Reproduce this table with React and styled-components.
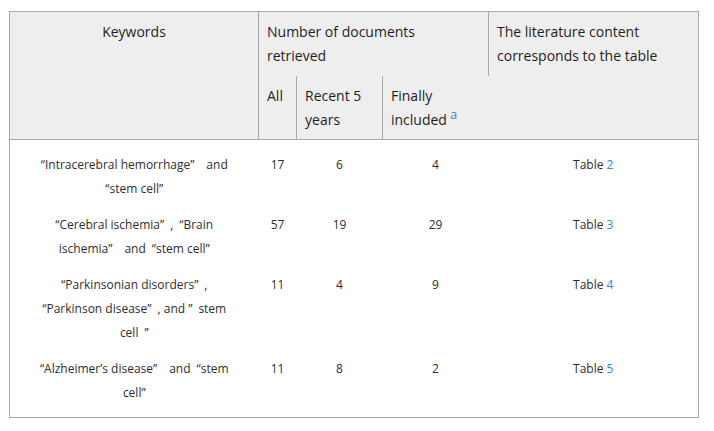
import React from 'react';
import styled, { createGlobalStyle } from 'styled-components';

const GlobalStyle = createGlobalStyle`
  body {
    margin: 0;
    background: #fff;
    font-family: "Open Sans", "Liberation Sans", sans-serif;
  }
`;

const Page = styled.div`
  padding: 11px 0 0 9px;
`;

const Table = styled.table`
  width: 689px;
  table-layout: fixed;
  border-collapse: collapse;
  border: 1px solid #a8a8a8;
`;

const HeadCell = styled.th`
  background-color: #eeeeee;
  color: #1e1e1e;
  font-size: 14px;
  font-weight: 400;
  line-height: 24px;
  text-align: ${(p) => (p.$center ? 'center' : 'left')};
  vertical-align: top;
  padding: 8px 8px ${(p) => (p.$lower ? '7px' : '8px')};
  border-right: ${(p) => (p.$divider ? '1px solid #a8a8a8' : 'none')};
  border-bottom: ${(p) => (p.$lower ? '1px solid #a8a8a8' : 'none')};
`;

const Sup = styled.sup`
  color: #3f7fbf;
  font-size: 13px;
  line-height: 0;
  margin-left: 3px;
  vertical-align: 6px;
`;

const Row = styled.tr`
  &:first-child td {
    padding-top: 13px;
  }
  &:last-child td {
    padding-bottom: 12px;
  }
`;

const Cell = styled.td`
  color: #2e2e2e;
  font-size: 12px;
  line-height: 24px;
  text-align: center;
  vertical-align: top;
  padding: 6px ${(p) => (p.$wide ? '20px' : '4px')};
`;

const Ref = styled.span`
  color: #3a87c8;
`;

const rows = [
  {
    keywords: ['\u201cIntracerebral hemorrhage\u201d\u2003and', '\u201cstem cell\u201d'],
    all: 17,
    recent: 6,
    included: 4,
    table: 2,
  },
  {
    keywords: ['\u201cCerebral ischemia\u201d\u2002,\u2002\u201cBrain', 'ischemia\u201d\u2003and\u2002\u201cstem cell\u201d'],
    all: 57,
    recent: 19,
    included: 29,
    table: 3,
  },
  {
    keywords: ['\u201cParkinsonian disorders\u201d\u2002,', '\u201cParkinson disease\u201d\u2002, and \u201d\u2002stem', 'cell\u2002\u201d'],
    all: 11,
    recent: 4,
    included: 9,
    table: 4,
  },
  {
    keywords: ['\u201cAlzheimer\u2019s disease\u201d\u2003and\u2002\u201cstem', 'cell\u201d'],
    all: 11,
    recent: 8,
    included: 2,
    table: 5,
  },
];

const App = () => (
  <Page>
    <GlobalStyle />
    <Table>
      <colgroup>
        <col style={{ width: 249 }} />
        <col style={{ width: 38 }} />
        <col style={{ width: 86 }} />
        <col style={{ width: 106 }} />
        <col style={{ width: 210 }} />
      </colgroup>
      <thead>
        <tr>
          <HeadCell rowSpan={2} $center $divider $lower>
            Keywords
          </HeadCell>
          <HeadCell colSpan={3} $divider>
            Number of documents
            <br />
            retrieved
          </HeadCell>
          <HeadCell>The literature content corresponds to the table</HeadCell>
        </tr>
        <tr>
          <HeadCell $divider $lower>All</HeadCell>
          <HeadCell $divider $lower>Recent 5 years</HeadCell>
          <HeadCell $lower>
            Finally included<Sup>a</Sup>
          </HeadCell>
          <HeadCell $lower />
        </tr>
      </thead>
      <tbody>
        {rows.map((r) => (
          <Row key={r.table}>
            <Cell $wide>
              {r.keywords.map((line, i) => (
                <React.Fragment key={i}>
                  {i > 0 && <br />}
                  {line}
                </React.Fragment>
              ))}
            </Cell>
            <Cell>{r.all}</Cell>
            <Cell>{r.recent}</Cell>
            <Cell>{r.included}</Cell>
            <Cell>
              Table <Ref>{r.table}</Ref>
            </Cell>
          </Row>
        ))}
      </tbody>
    </Table>
  </Page>
);

export default App;
